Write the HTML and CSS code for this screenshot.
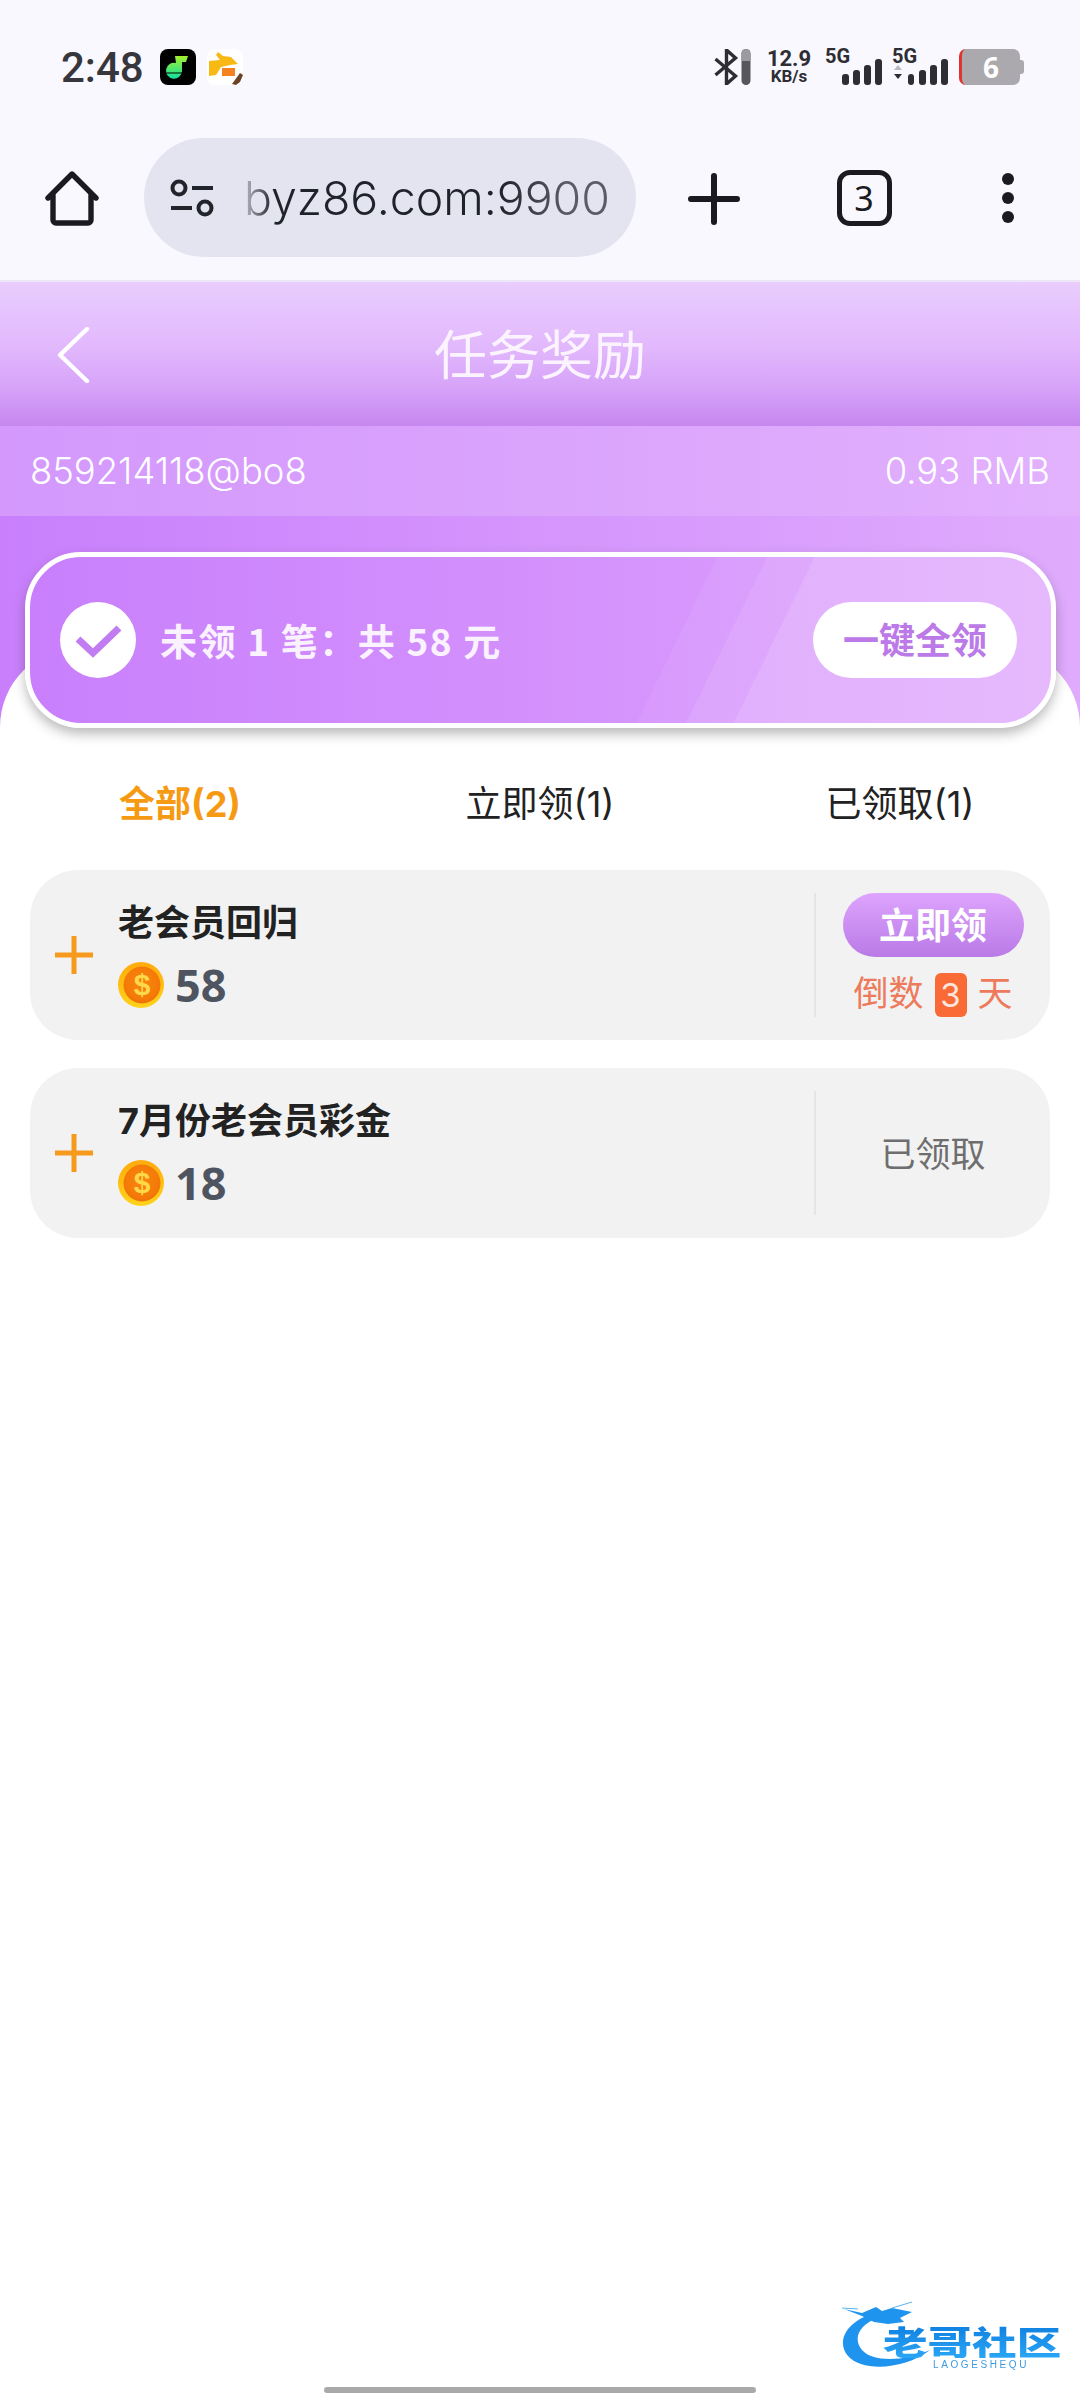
FILE: index.html
```html
<!DOCTYPE html>
<html lang="zh-CN">
<head>
    <meta charset="UTF-8">
    <meta name="viewport" content="width=device-width, initial-scale=1.0">
    <title>任务奖励</title>
    <link rel="stylesheet" href="styles.css">
</head>
<body>
    <svg class="defs" width="0" height="0">
        <defs>
            <radialGradient id="coin-face" cx="50%" cy="45%" r="60%">
                <stop offset="0" stop-color="#f9860f"/>
                <stop offset="0.75" stop-color="#f47a08"/>
                <stop offset="1" stop-color="#e86a04"/>
            </radialGradient>
            <linearGradient id="coin-rim" x1="0" y1="0" x2="0" y2="1">
                <stop offset="0" stop-color="#ffab0c"/>
                <stop offset="1" stop-color="#ffd21a"/>
            </linearGradient>
            <linearGradient id="note-green" x1="0" y1="0" x2="0" y2="1">
                <stop offset="0" stop-color="#a4f02c"/>
                <stop offset="1" stop-color="#0fe0a0"/>
            </linearGradient>
        </defs>
    </svg>

    <div class="status-bar">
        <div class="status-left">
            <span class="clock">2:48</span>
            <svg class="app-icon" viewBox="0 0 36 36">
                <rect width="36" height="36" rx="8" fill="#000"/>
                <path d="M15 7h13l-2 6h-4v9a8 8 0 1 1-6-8z" fill="url(#note-green)"/>
                <path d="M6 24h24" stroke="#000" stroke-width="1"/>
            </svg>
            <svg class="app-icon" viewBox="0 0 36 36">
                <rect width="36" height="36" rx="8" fill="#fff"/>
                <path d="M11 3l5 4 8 1 7 7-8 1-9 2-5 8-7 1V12l11-1-4-5z" fill="#f9b915"/>
                <rect x="15" y="19" width="13" height="8" fill="#f5821f"/>
                <path d="M25 35l8-11 3 2-3 7-4 3z" fill="#6b4226"/>
            </svg>
        </div>
        <div class="status-right">
            <svg class="bt-icon" viewBox="0 0 36 36">
                <path d="M1 10l20 17-9 8V1l9 8L1 26" fill="none" stroke="#2d2d33" stroke-width="3.4"/>
                <rect x="27" y="0" width="9" height="36" rx="4.5" fill="#56565c"/>
                <path d="M27 12V4.5a4.5 4.5 0 0 1 9 0V12z" fill="#9a9aa0"/>
            </svg>
            <div class="speed">
                <span>12.9</span>
                <span>KB/s</span>
            </div>
            <div class="signal">
                <span class="net">5G</span>
                <svg class="bars" viewBox="0 0 40 26">
                    <rect x="0" y="15" width="7" height="11" rx="3" />
                    <rect x="11" y="11" width="7" height="15" rx="3" />
                    <rect x="22" y="6" width="7" height="20" rx="3" />
                    <rect x="33" y="0" width="7" height="26" rx="3" />
                </svg>
            </div>
            <div class="signal signal-second">
                <span class="net">5G</span>
                <svg class="bars bars-wide" viewBox="0 0 54 26">
                    <path d="M0 11l4-5 4 5z" fill="#b9b9bf"/>
                    <path d="M0 15h8l-4 5z" fill="#2d2d33"/>
                    <rect x="14" y="15" width="6" height="11" rx="3" />
                    <rect x="25" y="11" width="7" height="15" rx="3" />
                    <rect x="36" y="6" width="7" height="20" rx="3" />
                    <rect x="47" y="0" width="7" height="26" rx="3" />
                </svg>
            </div>
            <div class="battery"><span>6</span></div>
        </div>
    </div>

    <div class="toolbar">
        <svg class="tool-icon" viewBox="0 0 54 56">
            <path d="M3 28L27 4l24 24M8 23v27a3 3 0 0 0 3 3h32a3 3 0 0 0 3-3V23" fill="none" stroke="#1a1a20" stroke-width="5.4" stroke-linecap="round" stroke-linejoin="round"/>
        </svg>
        <div class="url-pill">
            <svg class="tune-icon" viewBox="0 0 44 38">
                <circle cx="9" cy="9" r="6.5" fill="none" stroke="#22242c" stroke-width="4"/>
                <circle cx="35" cy="29" r="6.5" fill="none" stroke="#22242c" stroke-width="4"/>
                <path d="M22 9h21M1 29h21" stroke="#22242c" stroke-width="4"/>
            </svg>
            <span class="url-text">byz86.com:9900</span>
        </div>
        <svg class="tool-icon" viewBox="0 0 54 54">
            <path d="M27 5v46M4 28h46" stroke="#1a1a20" stroke-width="6" stroke-linecap="round"/>
        </svg>
        <div class="tab-count">3</div>
        <svg class="tool-icon" viewBox="0 0 54 56">
            <circle cx="27" cy="9" r="6" fill="#1a1a20"/>
            <circle cx="27" cy="28" r="6" fill="#1a1a20"/>
            <circle cx="27" cy="47" r="6" fill="#1a1a20"/>
        </svg>
    </div>

    <div class="nav">
        <svg class="back" viewBox="0 0 34 56">
            <path d="M31 2L4 28l27 26" fill="none" stroke="#fff" stroke-width="4.4" stroke-linecap="round" stroke-linejoin="round"/>
        </svg>
        <h1 class="nav-title">任务奖励</h1>
    </div>

    <div class="hero">
        <div class="account">
            <span>859214118@bo8</span>
            <span>0.93 RMB</span>
        </div>
        <div class="claim-card">
            <div class="claim-info">
                <svg class="claim-check" viewBox="0 0 76 76">
                    <circle cx="38" cy="38" r="38" fill="#fff"/>
                    <path d="M18 37l15 14 26-25" fill="none" stroke="#c07cf0" stroke-width="7"/>
                </svg>
                <span class="claim-text">未领 1 笔：共 58 元</span>
            </div>
            <button class="claim-all">一键全领</button>
        </div>
    </div>

    <div class="sheet">
        <div class="tabs">
            <div class="tab active">全部(2)</div>
            <div class="tab">立即领(1)</div>
            <div class="tab">已领取(1)</div>
        </div>

        <div class="task-list">
            <div class="task">
                <div class="task-main">
                    <svg class="plus" viewBox="0 0 38 38">
                        <path d="M19 0v38M0 19h38" stroke="#f59a1c" stroke-width="5"/>
                    </svg>
                    <div class="task-info">
                        <div class="task-name">老会员回归</div>
                        <div class="task-amount">
                            <svg class="coin" viewBox="0 0 46 46">
                                <circle cx="23" cy="23" r="23" fill="url(#coin-rim)"/>
                                <circle cx="24" cy="23" r="18.5" fill="url(#coin-face)"/>
                                <text x="24" y="33" class="coin-sign">$</text>
                            </svg>
                            <span>58</span>
                        </div>
                    </div>
                </div>
                <div class="task-side">
                    <button class="claim-now">立即领</button>
                    <div class="countdown">倒数<span class="days">3</span>天</div>
                </div>
            </div>

            <div class="task">
                <div class="task-main">
                    <svg class="plus" viewBox="0 0 38 38">
                        <path d="M19 0v38M0 19h38" stroke="#f59a1c" stroke-width="5"/>
                    </svg>
                    <div class="task-info">
                        <div class="task-name">7月份老会员彩金</div>
                        <div class="task-amount">
                            <svg class="coin" viewBox="0 0 46 46">
                                <circle cx="23" cy="23" r="23" fill="url(#coin-rim)"/>
                                <circle cx="24" cy="23" r="18.5" fill="url(#coin-face)"/>
                                <text x="24" y="33" class="coin-sign">$</text>
                            </svg>
                            <span>18</span>
                        </div>
                    </div>
                </div>
                <div class="task-side">
                    <span class="claimed">已领取</span>
                </div>
            </div>
        </div>
    </div>

    <!-- watermark sits over the page -->
    <div class="watermark">
        <svg class="dragon" viewBox="0 0 280 120">
            <path d="M72 34C46 42 36 62 48 76c14 16 56 14 82-6-26 12-58 12-68 0-10-12-2-26 16-32z" fill="#1e94ee"/>
            <path d="M44 29l18 4 14-6 6 4 10-3 20 4-12 6 4 4-16 2-14-2-12-6z" fill="#1e94ee"/>
            <path d="M92 28l20-6M42 28l16 1" stroke="#5cb4f2" stroke-width="1" fill="none"/>
        </svg>
        <div class="wm-name">老哥社区</div>
        <div class="wm-sub">LAOGESHEQU</div>
    </div>

    <div class="home-bar"></div>
</body>
</html>
```

FILE: styles.css
```css
* {
    box-sizing: border-box;
}
body {
    position: relative;
    display: flex;
    flex-direction: column;
    width: 1080px;
    height: 2400px;
    margin: 0;
    overflow: hidden;
    background: #fff;
    font-family: Inter, "Noto Sans CJK SC", sans-serif;
}
.defs {
    position: absolute;
}

/* phone status bar */
.status-bar {
    display: flex;
    justify-content: space-between;
    align-items: center;
    height: 134px;
    padding: 0 60px 0 61px;
    background: #f8f8fe;
    color: #2d2d33;
}
.status-left {
    display: flex;
    align-items: center;
}
.clock {
    width: 99px;
    font-family: Roboto, sans-serif;
    font-size: 42px;
    font-weight: 500;
    color: #36363c;
}
.app-icon {
    width: 36px;
    height: 36px;
    margin-right: 11px;
}
.status-right {
    display: flex;
    align-items: center;
    height: 36px;
}
.bt-icon {
    width: 37px;
    height: 36px;
}
.speed {
    display: flex;
    flex-direction: column;
    align-items: center;
    width: 44px;
    margin-left: 16px;
    font-family: Roboto, sans-serif;
    font-weight: 700;
}
.speed span:first-child {
    font-size: 22px;
    line-height: 19px;
}
.speed span:last-child {
    font-size: 17px;
    line-height: 17px;
}
.signal {
    position: relative;
    width: 56px;
    height: 36px;
    margin-left: 15px;
}
.signal-second {
    margin-left: 11px;
    width: 55px;
}
.net {
    position: absolute;
    top: -3px;
    left: -1px;
    font-family: Roboto, sans-serif;
    font-size: 20px;
    font-weight: 700;
    line-height: 20px;
}
.bars {
    position: absolute;
    right: 0;
    bottom: 0;
    width: 40px;
    height: 26px;
    fill: #2d2d33;
}
.bars-wide {
    width: 54px;
}
.battery {
    position: relative;
    display: flex;
    justify-content: center;
    align-items: center;
    width: 61px;
    height: 36px;
    margin-left: 11px;
    border-left: 3px solid #e0342e;
    border-radius: 7px;
    background: #aba9ad;
    color: #fff;
    font-family: "Noto Sans", sans-serif;
    font-size: 28px;
    font-weight: 700;
}
.battery::after {
    content: "";
    position: absolute;
    top: 11px;
    right: -4px;
    width: 4px;
    height: 14px;
    border-radius: 0 3px 3px 0;
    background: #aba9ad;
}

/* browser toolbar */
.toolbar {
    display: grid;
    grid-template-columns: 144px 492px 156px 144px 144px;
    align-items: center;
    justify-items: center;
    height: 148px;
    padding: 4px 0 25px;
    background: #f8f8fe;
    border-bottom: 2px solid #ece6f6;
}
.tool-icon {
    width: 54px;
    height: 56px;
}
.url-pill {
    display: flex;
    align-items: center;
    width: 100%;
    height: 119px;
    padding: 0 24px 0 26px;
    border-radius: 60px;
    background: #e3e4ef;
}
.tune-icon {
    flex: none;
    width: 44px;
    height: 38px;
    margin-right: 30px;
}
.url-text {
    font-size: 46.4px;
    font-weight: 300;
    line-height: 60px;
    white-space: nowrap;
    background: linear-gradient(90deg, #b8b9c4 0%, #20222b 8%, #20222b 70%, #5a5b66 88%);
    -webkit-background-clip: text;
    background-clip: text;
    color: transparent;
}
.tab-count {
    display: flex;
    justify-content: center;
    align-items: center;
    width: 55px;
    height: 56px;
    border: 5px solid #1a1a20;
    border-radius: 13px;
    font-family: "Noto Sans", sans-serif;
    font-size: 34px;
    color: #1a1a20;
}

/* page header */
.nav {
    position: relative;
    display: flex;
    justify-content: center;
    align-items: center;
    height: 144px;
    padding-bottom: 4px;
    background: linear-gradient(180deg, #e9cdfd 0%, #e2b8fd 45%, #d7a4f9 72%, #c687ef 100%);
}
.back {
    position: absolute;
    left: 56px;
    top: 45px;
    width: 34px;
    height: 56px;
}
.nav-title {
    margin: 0;
    font-size: 53px;
    font-weight: 400;
    color: #fbf4ff;
}

.hero {
    display: flex;
    flex-direction: column;
    height: 302px;
    background: linear-gradient(90deg, #c97ffc 0%, #e0abfd 100%);
}
.account {
    display: flex;
    justify-content: space-between;
    align-items: center;
    height: 90px;
    padding: 0 30px;
    background: linear-gradient(90deg, rgba(255, 255, 255, 0.2) 0%, rgba(255, 255, 255, 0.08) 100%);
    font-size: 36.4px;
    font-weight: 300;
    color: #fff;
}
.claim-card {
    position: relative;
    z-index: 1;
    display: flex;
    justify-content: space-between;
    align-items: center;
    height: 176px;
    margin: 36px 24px 0 25px;
    padding: 0 34px 0 30px;
    border: 5px solid #fff;
    border-radius: 56px;
    background:
        linear-gradient(116deg, transparent 62.4%, rgba(255, 255, 255, 0.06) 62.4%, rgba(255, 255, 255, 0.06) 66.9%, rgba(255, 255, 255, 0.14) 66.9%, rgba(255, 255, 255, 0.14) 71.2%, rgba(255, 255, 255, 0.24) 71.2%),
        linear-gradient(90deg, #c97ffc 0%, #dea3fd 100%);
    box-shadow: 0 6px 12px rgba(60, 60, 60, 0.35);
}
.claim-info {
    display: flex;
    align-items: center;
    gap: 24px;
}
.claim-check {
    width: 76px;
    height: 76px;
}
.claim-text {
    font-family: "Noto Sans CJK SC", sans-serif;
    font-size: 37px;
    font-weight: 700;
    letter-spacing: 1.6px;
    color: #fbf2ff;
    white-space: pre;
}
.claim-all {
    width: 204px;
    height: 76px;
    padding: 0 0 4px;
    border: none;
    border-radius: 38px;
    background: #fff;
    font-family: "Noto Sans CJK SC", sans-serif;
    font-size: 36px;
    font-weight: 700;
    color: #bb7ae8;
}

/* white sheet under the card */
.sheet {
    flex: 1;
    margin-top: -81px;
    border-radius: 80px 80px 0 0;
    background: #fff;
}
.tabs {
    display: grid;
    grid-template-columns: repeat(3, 1fr);
    padding: 132px 0 41px;
}
.tab {
    height: 50px;
    font-size: 36px;
    line-height: 50px;
    text-align: center;
    color: #222;
}
.tab.active {
    font-weight: 700;
    color: #f59a12;
}

.task-list {
    display: flex;
    flex-direction: column;
    gap: 28px;
    padding: 0 30px;
}
.task {
    display: flex;
    align-items: center;
    height: 170px;
    border-radius: 48px;
    background: #f2f2f2;
}
.task-main {
    display: flex;
    align-items: center;
    gap: 25px;
    width: 784px;
    padding-left: 25px;
}
.plus {
    width: 38px;
    height: 38px;
}
.task-info {
    display: flex;
    flex-direction: column;
    gap: 17px;
    margin-top: -1px;
}
.task-name {
    font-size: 36px;
    font-weight: 700;
    line-height: 44px;
    color: #222;
}
.task-amount {
    display: flex;
    align-items: center;
    gap: 11px;
    font-family: "Noto Sans", sans-serif;
    font-size: 45px;
    font-weight: 700;
    line-height: 46px;
    color: #4f5560;
}
.coin {
    width: 46px;
    height: 46px;
}
.coin-sign {
    font-family: "Liberation Sans", sans-serif;
    font-size: 30px;
    font-weight: 700;
    text-anchor: middle;
    fill: #ffd84a;
}
.task-side {
    display: flex;
    flex-direction: column;
    justify-content: center;
    align-items: center;
    gap: 16px;
    width: 236px;
    height: 124px;
    border-left: 2px solid #e5e5e5;
}
.claim-now {
    width: 181px;
    height: 66px;
    padding: 0 0 5px;
    border: none;
    border-radius: 33px;
    background: linear-gradient(180deg, #dea4fd 0%, #b97ae6 100%);
    font-family: "Noto Sans CJK SC", sans-serif;
    font-size: 36px;
    font-weight: 700;
    color: #fff;
}
.countdown {
    display: flex;
    align-items: flex-start;
    height: 44px;
    font-size: 35px;
    line-height: 40px;
    color: #ee7a5c;
}
.days {
    width: 32px;
    height: 44px;
    margin: 0 11px;
    border-radius: 6px;
    background: #f96a36;
    font-size: 33px;
    line-height: 44px;
    text-align: center;
    color: #fde5dc;
}
.claimed {
    margin-bottom: 4px;
    font-size: 35px;
    color: #6e6e6e;
}

/* watermark + gesture bar */
.watermark {
    position: absolute;
    left: 800px;
    top: 2280px;
    width: 280px;
    height: 120px;
    filter: blur(0.5px);
}
.dragon {
    width: 280px;
    height: 120px;
}
.wm-name {
    position: absolute;
    left: 83px;
    top: 44px;
    font-family: "Noto Sans CJK SC", sans-serif;
    font-size: 33px;
    font-weight: 900;
    line-height: 34px;
    white-space: nowrap;
    transform: scaleX(1.35);
    transform-origin: left center;
    background: linear-gradient(180deg, #0f7fe0 0%, #2aa6f5 100%);
    -webkit-background-clip: text;
    background-clip: text;
    color: transparent;
}
.wm-sub {
    position: absolute;
    left: 133px;
    top: 79px;
    font-family: "Liberation Sans", sans-serif;
    font-size: 10px;
    letter-spacing: 2.6px;
    color: #3e9be0;
}
.home-bar {
    position: absolute;
    left: 324px;
    bottom: 7px;
    width: 432px;
    height: 6px;
    border-radius: 3px;
    background: #a9a9a9;
}
```
